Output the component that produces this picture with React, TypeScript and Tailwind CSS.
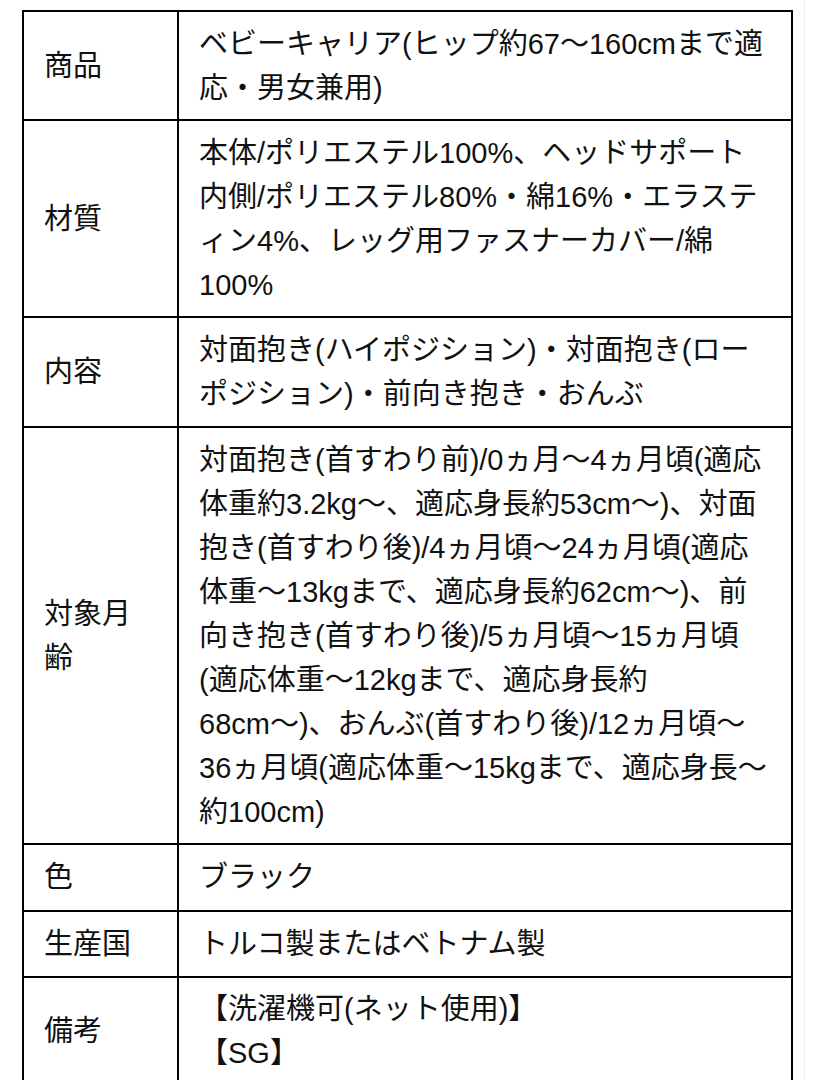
const rows: { label: string[]; lines: string[]; pad: string }[] = [
  {
    label: ["商品"],
    lines: ["ベビーキャリア(ヒップ約67〜160cmまで適", "応・男女兼用)"],
    pad: "pt-[10px] pb-[9px]",
  },
  {
    label: ["材質"],
    lines: [
      "本体/ポリエステル100%、ヘッドサポート",
      "内側/ポリエステル80%・綿16%・エラステ",
      "ィン4%、レッグ用ファスナーカバー/綿",
      "100%",
    ],
    pad: "pt-[10px] pb-[9px]",
  },
  {
    label: ["内容"],
    lines: ["対面抱き(ハイポジション)・対面抱き(ロー", "ポジション)・前向き抱き・おんぶ"],
    pad: "pt-[10px] pb-[10px]",
  },
  {
    label: ["対象月", "齢"],
    lines: [
      "対面抱き(首すわり前)/0ヵ月〜4ヵ月頃(適応",
      "体重約3.2kg〜、適応身長約53cm〜)、対面",
      "抱き(首すわり後)/4ヵ月頃〜24ヵ月頃(適応",
      "体重〜13kgまで、適応身長約62cm〜)、前",
      "向き抱き(首すわり後)/5ヵ月頃〜15ヵ月頃",
      "(適応体重〜12kgまで、適応身長約",
      "68cm〜)、おんぶ(首すわり後)/12ヵ月頃〜",
      "36ヵ月頃(適応体重〜15kgまで、適応身長〜",
      "約100cm)",
    ],
    pad: "pt-[10px] pb-[9px]",
  },
  { label: ["色"], lines: ["ブラック"], pad: "pt-[10px] pb-[11px]" },
  { label: ["生産国"], lines: ["トルコ製またはベトナム製"], pad: "pt-[10px] pb-[10px]" },
  { label: ["備考"], lines: ["【洗濯機可(ネット使用)】", "【SG】"], pad: "pt-[9px] pb-[12px]" },
];

export default function App() {
  return (
    <div
      className="min-h-screen w-[814px] bg-white text-[#111] flex items-stretch overflow-hidden"
      style={{ fontFamily: '"Liberation Sans", "Noto Sans CJK JP", sans-serif' }}
    >
      <div className="pt-[10px] pl-[22px]">
        <table className="w-[771px] border-collapse border-2 border-black text-[29px] leading-[44px]">
          <tbody>
            {rows.map((r, i) => (
              <tr key={i}>
                <td className={`w-[155px] border-2 border-black pl-[20px] pr-[10px] align-middle ${r.pad}`}>
                  {r.label.map((l, j) => (
                    <div key={j}>{l}</div>
                  ))}
                </td>
                <td
                  className={`border-2 border-black pl-[20px] pr-[10px] align-middle whitespace-nowrap ${r.pad}`}
                >
                  {r.lines.map((l, j) => (
                    <div key={j}>{l}</div>
                  ))}
                </td>
              </tr>
            ))}
          </tbody>
        </table>
      </div>
      <div className="ml-[11px] w-px bg-[#ececec]" />
    </div>
  );
}
